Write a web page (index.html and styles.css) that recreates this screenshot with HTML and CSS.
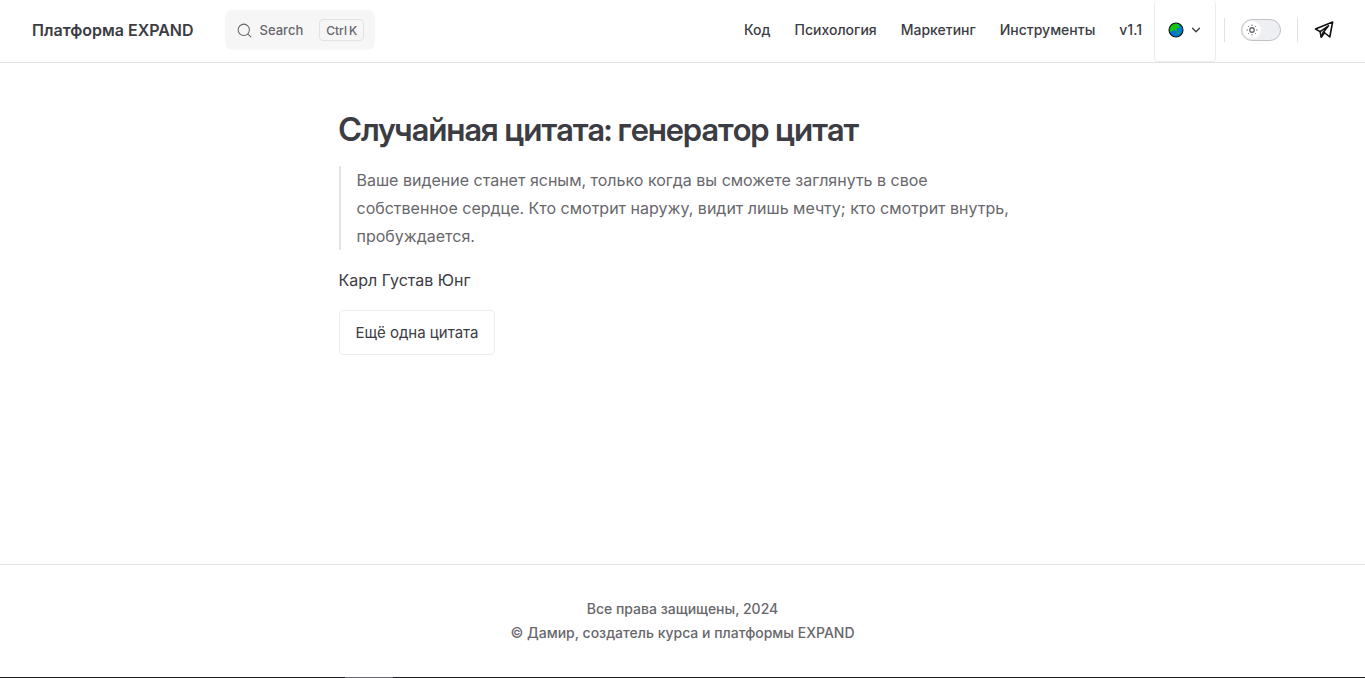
FILE: index.html
```html
<!DOCTYPE html>
<html lang="ru">
<head>
<meta charset="utf-8">
<meta name="viewport" content="width=device-width, initial-scale=1">
<title>Случайная цитата: генератор цитат</title>
<link rel="stylesheet" href="styles.css">
</head>
<body>
<header class="nav">
  <a class="nav-title" href="#">Платформа EXPAND</a>
  <button class="search" type="button">
    <svg class="search-icon" viewBox="0 0 20 20" aria-hidden="true"><path d="M14.386 14.386l4.0877 4.0877-4.0877-4.0877c-2.9418 2.9419-7.7115 2.9419-10.6533 0-2.9419-2.9418-2.9419-7.7115 0-10.6533 2.9418-2.9419 7.7115-2.9419 10.6533 0 2.9419 2.9418 2.9419 7.7115 0 10.6533z" fill="none" stroke="currentColor" stroke-width="1.4" stroke-linecap="round" stroke-linejoin="round"/></svg>
    <span class="search-label">Search</span>
    <span class="search-keys"><kbd>Ctrl</kbd><kbd>K</kbd></span>
  </button>
  <nav class="menu">
    <a href="#">Код</a>
    <a href="#">Психология</a>
    <a href="#">Маркетинг</a>
    <a href="#">Инструменты</a>
    <a href="#">v1.1</a>
  </nav>
  <button class="flyout" type="button" aria-label="Язык" aria-haspopup="true">
    <svg class="globe" viewBox="0 0 16 16" aria-hidden="true">
      <circle cx="8" cy="8" r="7" fill="#0078d7"/>
      <path d="M1.300 9.800C.9 5.400 3.500 1.500 8 1.300c1.600 0 2.600.4 3.600 1l-1.300 1.500 1.700.9-.9 1.500-1.900-.6-.8 1.600 1.300 1.300-1.800.8-1.400-1.500-1.500 1.200-1.500-.3-.8 1.500z" fill="#16c60c"/>
      <path d="M8.500 9.700l2.300-.4 1 1.400-1.200 1.700-1.600-.6z" fill="#16a05c"/>
      <circle cx="8" cy="8" r="7" fill="none" stroke="#111" stroke-width="1.100"/>
    </svg>
    <svg class="chevron" viewBox="0 0 24 24" aria-hidden="true"><path d="M6 9l6 6 6-6" fill="none" stroke="currentColor" stroke-width="2.200" stroke-linecap="round" stroke-linejoin="round"/></svg>
  </button>
  <div class="appearance">
    <button class="switch" type="button" role="switch" aria-checked="false" aria-label="Тёмная тема">
      <span class="switch-check">
        <svg class="sun" viewBox="0 0 24 24" aria-hidden="true" fill="none" stroke="currentColor" stroke-width="2" stroke-linecap="round"><circle cx="12" cy="12" r="4.500" stroke-width="2.600"/><path d="M12 2v1M12 21v1M4.900 4.900l.7.7M18.400 18.400l.7.7M2 12h1M21 12h1M4.900 19.100l.7-.7M18.400 5.600l.7-.7"/></svg>
      </span>
    </button>
  </div>
  <a class="social" href="#" aria-label="Telegram">
    <svg class="plane" viewBox="0 0 20 20" aria-hidden="true" fill="none" stroke="currentColor" stroke-width="1.600" stroke-linejoin="round" stroke-linecap="round"><path d="M18.600 2L1.500 9l4.600 2.600L14.500 5.800 9.600 12l6.200 5z"/><path d="M6.100 11.600l1.100 5.600 3-3.900"/><path d="M7.300 16.500l2-4.500"/></svg>
  </a>
</header>
<main class="content">
  <article class="doc">
    <h1>Случайная цитата: генератор цитат</h1>
    <blockquote>Ваше видение станет ясным, только когда вы сможете заглянуть в свое собственное сердце. Кто смотрит наружу, видит лишь мечту; кто смотрит внутрь, пробуждается.</blockquote>
    <p class="author">Карл Густав Юнг</p>
    <button class="next" type="button">Ещё одна цитата</button>
  </article>
</main>
<footer class="footer">
  <p>Все права защищены, 2024</p>
  <p>© Дамир, создатель курса и платформы EXPAND</p>
</footer>
<div class="edge"><span class="edge-mark"></span></div>
</body>
</html>
```
FILE: styles.css
```css
* {
  box-sizing: border-box;
}

body {
  margin: 0;
  min-height: 100vh;
  display: flex;
  flex-direction: column;
  background: #fff;
  color: #3c3c43;
  font-family: Inter, "Noto Sans", sans-serif;
  font-size: 16px;
  line-height: 24px;
}

a {
  color: inherit;
  text-decoration: none;
}

button {
  font: inherit;
  color: inherit;
  cursor: pointer;
}

svg {
  display: block;
  flex: none;
}

.nav {
  display: flex;
  align-items: center;
  height: 63px;
  padding: 0 31px 2px 32px;
  border-bottom: 1px solid #e2e2e3;
}

.nav-title {
  margin-right: 31px;
  font-weight: 600;
}

.search {
  display: flex;
  align-items: center;
  height: 40px;
  padding: 0 11px 0 12px;
  border: 0;
  border-radius: 8px;
  background: #f6f6f7;
  color: #67676c;
}

.search-icon {
  width: 15px;
  height: 15px;
  margin-right: 8px;
}

.search-label {
  margin-right: 16px;
  font-size: 13px;
  font-weight: 500;
}

.search-keys {
  display: flex;
  gap: 2px;
  height: 22px;
  padding: 0 6px;
  border: 1px solid #e2e2e3;
  border-radius: 4px;
  font-size: 12px;
  font-weight: 500;
  line-height: 21px;
}

.search-keys kbd {
  font-family: inherit;
}

.menu {
  display: flex;
  gap: 24px;
  margin-left: auto;
  padding-right: 12px;
  font-size: 14px;
  font-weight: 500;
}

.flyout {
  display: flex;
  align-items: center;
  align-self: flex-start;
  gap: 5px;
  height: 62px;
  padding: 0 12px 2px 13px;
  border: 1px solid #ededee;
  border-top: 0;
  border-radius: 4px;
  background: none;
}

.globe {
  width: 16px;
  height: 16px;
}

.chevron {
  width: 14px;
  height: 14px;
}

.appearance {
  display: flex;
  align-items: center;
  height: 24px;
  margin-left: 8px;
  padding: 0 16px;
  border: solid #e2e2e3;
  border-width: 0 1px;
}

.switch {
  width: 40px;
  height: 22px;
  padding: 1px;
  border: 1px solid #c2c2c4;
  border-radius: 11px;
  background: #eeeff3;
}

.switch-check {
  display: grid;
  place-items: center;
  width: 18px;
  height: 18px;
  border-radius: 50%;
  background: #fff;
  color: #67676c;
}

.sun {
  width: 12px;
  height: 12px;
}

.social {
  margin-left: 16px;
  color: #111;
}

.plane {
  width: 20px;
  height: 20px;
}

.content {
  flex: 1;
  padding: 47px 32px;
}

.doc {
  max-width: 688px;
  margin: 0 auto;
}

h1 {
  margin: 0 0 16px;
  font-family: "Inter Display", Inter, "Noto Sans", sans-serif;
  font-size: 32px;
  font-weight: 600;
  font-variation-settings: "opsz" 32;
  line-height: 40px;
  letter-spacing: -0.02em;
}

blockquote {
  margin: 0 0 16px;
  padding-left: 16px;
  border-left: 2px solid #e2e2e3;
  color: #67676c;
  line-height: 28px;
}

.author {
  margin: 0 0 16px;
  line-height: 28px;
}

.next {
  height: 45px;
  padding: 0 16px;
  border: 1px solid #ededee;
  border-radius: 4px;
  background: #fff;
  font-size: 15px;
}

.footer {
  padding: 32px 24px;
  border-top: 1px solid #e2e2e3;
  color: #67676c;
  font-size: 14px;
  font-weight: 500;
  text-align: center;
}

.footer p {
  margin: 0;
}

.edge {
  display: flex;
  height: 1px;
  background: #1f1f22;
}

.edge-mark {
  width: 48px;
  margin-left: 345px;
  background: #67676c;
}
```
